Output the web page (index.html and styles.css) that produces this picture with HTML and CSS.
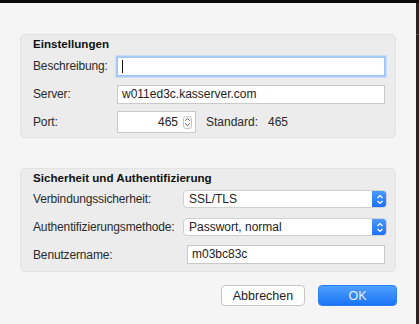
FILE: index.html
```html
<!DOCTYPE html>
<html lang="de">
<head>
    <meta charset="UTF-8">
    <meta name="viewport" content="width=device-width, initial-scale=1.0">
    <title>Server-Einstellungen</title>
    <link rel="stylesheet" href="styles.css">
</head>
<body>
    <div class="topbar"></div>
    <div class="screen">
        <div class="dialog">
            <div class="group group-server">
                <h2>Einstellungen</h2>
                <div class="row row-desc">
                    <label for="desc">Beschreibung:</label>
                    <div class="field focused"><span class="caret"></span></div>
                </div>
                <div class="row row-server">
                    <label>Server:</label>
                    <div class="field">w011ed3c.kasserver.com</div>
                </div>
                <div class="row row-port">
                    <label>Port:</label>
                    <div class="field port">
                        <span class="port-value">465</span>
                        <span class="stepper">
                            <svg width="7" height="10" viewBox="0 0 7 10"><path d="M1.2 3.6 3.5 1.4 5.8 3.6M1.2 6.4 3.5 8.6 5.8 6.4" fill="none" stroke="#555" stroke-width="1"/></svg>
                        </span>
                    </div>
                    <span class="std-label">Standard:</span>
                    <span class="std-value">465</span>
                </div>
            </div>

            <div class="group group-auth">
                <h2>Sicherheit und Authentifizierung</h2>
                <div class="row row-pop">
                    <label>Verbindungssicherheit:</label>
                    <div class="popup">
                        <span class="popup-text">SSL/TLS</span>
                        <span class="popup-arrow">
                            <svg width="8" height="11" viewBox="0 0 8 11"><path d="M1.5 4 4 1.6 6.5 4M1.5 7 4 9.4 6.5 7" fill="none" stroke="#fff" stroke-width="1.3"/></svg>
                        </span>
                    </div>
                </div>
                <div class="row row-pop2">
                    <label>Authentifizierungsmethode:</label>
                    <div class="popup">
                        <span class="popup-text">Passwort, normal</span>
                        <span class="popup-arrow">
                            <svg width="8" height="11" viewBox="0 0 8 11"><path d="M1.5 4 4 1.6 6.5 4M1.5 7 4 9.4 6.5 7" fill="none" stroke="#fff" stroke-width="1.3"/></svg>
                        </span>
                    </div>
                </div>
                <div class="row row-user">
                    <label>Benutzername:</label>
                    <div class="field user">m03bc83c</div>
                </div>
            </div>

            <div class="buttons">
                <button class="btn">Abbrechen</button>
                <button class="btn btn-ok">OK</button>
            </div>
        </div>
        <div class="edge"><div class="edge-line"></div></div>
    </div>
</body>
</html>
```

FILE: styles.css
```css
* {
    margin: 0;
    padding: 0;
    box-sizing: border-box;
}

body {
    font-family: 'Liberation Sans', Arial, sans-serif;
    font-size: 12px;
    color: #262626;
    background: #f5f5f5;
    width: 419px;
    height: 324px;
    overflow: hidden;
}

.topbar {
    height: 3px;
    background: #0c0c0c;
}

.screen {
    display: flex;
    height: 321px;
}

.dialog {
    flex: 1;
    padding: 31px 20px 0 20px;
}

.edge {
    width: 3px;
    background: #242424;
}

.edge-line {
    margin-top: 31px;
    height: 1px;
    background: #4a4a4a;
}

.group {
    height: 104px;
    background: #ececec;
    border: 1px solid #e2e2e2;
    border-radius: 5px;
    padding: 0 10px 0 12px;
}

.group-auth {
    margin-top: 30px;
}

h2 {
    font-size: 11.6px;
    font-weight: bold;
    color: #111;
    height: 15px;
    line-height: 15px;
    margin-top: 1px;
}

.row {
    display: flex;
    align-items: center;
}

label {
    color: #2a2a2a;
    width: 84px;
    flex-shrink: 0;
    letter-spacing: -0.15px;
}

.row-desc {
    margin-top: 5px;
    height: 20px;
}

.row-server {
    margin-top: 8px;
    height: 20px;
}

.row-port {
    margin-top: 7px;
    height: 22px;
}

.field {
    flex: 1;
    height: 19px;
    background: #fff;
    border: 1px solid #c9c9c9;
    padding: 0 4px;
    line-height: 17px;
    color: #222;
}

.field.focused {
    border: 1px solid #9fc4f5;
    box-shadow: 0 0 0 1.5px #a8cdfb;
    display: flex;
    align-items: center;
}

.caret {
    width: 1px;
    height: 13px;
    background: #111;
}

.field.port {
    flex: none;
    width: 79px;
    height: 22px;
    display: flex;
    align-items: center;
    justify-content: flex-end;
    padding: 0 3px 0 4px;
}

.port-value {
    margin-right: 5px;
}

.stepper {
    width: 9px;
    height: 13px;
    border: 1px solid #c4c4c4;
    border-radius: 3px;
    display: flex;
    align-items: center;
    justify-content: center;
}

.std-label {
    margin-left: 10px;
    width: 62px;
    color: #2a2a2a;
}

.std-value {
    color: #2a2a2a;
}

.group-auth label {
    width: 150px;
}

.row-pop {
    margin-top: 5px;
    height: 18px;
}

.row-pop2 {
    margin-top: 10px;
    height: 18px;
}

.row-user {
    margin-top: 9px;
    height: 19px;
}

.popup {
    flex: none;
    width: 204px;
    height: 18px;
    margin-right: -2px;
    background: #fff;
    border: 1px solid #d0d0d0;
    border-radius: 4px;
    display: flex;
    align-items: center;
    overflow: hidden;
}

.popup-text {
    flex: 1;
    padding-left: 5px;
    color: #222;
}

.popup-arrow {
    width: 15px;
    height: 18px;
    margin-right: -1px;
    background: linear-gradient(#4d9cfd, #1a6ef7);
    border-radius: 0 4px 4px 0;
    display: flex;
    align-items: center;
    justify-content: center;
}

.field.user {
    margin-left: 4px;
}

.buttons {
    display: flex;
    justify-content: flex-end;
    gap: 13px;
    margin-top: 13px;
    margin-right: -1px;
}

.btn {
    height: 21px;
    font-family: inherit;
    font-size: 12.5px;
    background: #fff;
    border: 1px solid #c6c6c6;
    border-radius: 4px;
    color: #1d1d1d;
    width: 84px;
}

.btn-ok {
    width: 79px;
    border: 1px solid #2b7ff7;
    background: linear-gradient(#4fa0fd, #1b74f7);
    color: #e8f1ff;
}
```
